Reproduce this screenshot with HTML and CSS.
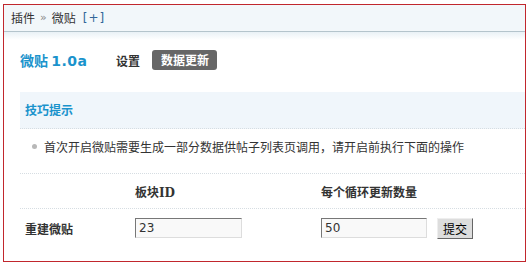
FILE: index.html
```html
<!DOCTYPE html>
<html lang="zh-CN">
<head>
<meta charset="utf-8">
<title>微贴</title>
<link rel="stylesheet" href="styles.css">
</head>
<body>
<div class="frame">
  <div class="topbar">
    <span>插件</span><span class="sep">»</span><span>微贴</span><a class="add" href="#">[+]</a>
  </div>
  <div class="shadow"></div>
  <div class="main">
    <div class="titlerow">
      <h3 class="title">微贴 <span class="ver">1.0a</span></h3>
      <a class="tab" href="#">设置</a>
      <a class="tab current" href="#">数据更新</a>
    </div>
    <div class="tiphead">技巧提示</div>
    <div class="tiprow"><span class="dot"></span>首次开启微贴需要生成一部分数据供帖子列表页调用，请开启前执行下面的操作</div>
    <div class="grid head">
      <div></div>
      <div class="th">板块ID</div>
      <div class="th">每个循环更新数量</div>
    </div>
    <div class="grid body">
      <div class="label">重建微贴</div>
      <div><input class="txt" type="text" value="23"></div>
      <div class="last"><input class="txt" type="text" value="50"><button class="btn" type="button">提交</button></div>
    </div>
  </div>
</div>
</body>
</html>
```
FILE: styles.css
```css
html, body {
  margin: 0;
  padding: 0;
  background: #fff;
}
body {
  width: 528px;
  height: 263px;
  overflow: hidden;
  font-family: "DejaVu Sans", "Noto Sans CJK SC", sans-serif;
  font-size: 12px;
  color: #333;
}
.frame {
  margin: 4px 0 0 3px;
  width: 521px;
  height: 256px;
  border: 1px solid #c1272d;
  overflow: hidden;
}
.topbar {
  height: 26px;
  border-bottom: 1px solid #b4c4cc;
  background: #f2f7fa;
  display: flex;
  align-items: center;
  padding-left: 7px;
  font-family: "Noto Sans CJK SC", sans-serif;
  color: #333;
  line-height: 26px;
}
.topbar .sep {
  margin: 0 5px;
  color: #888;
  font-family: "DejaVu Sans", sans-serif;
  font-size: 11px;
}
.topbar .add {
  margin-left: 7px;
  color: #336699;
  text-decoration: none;
  font-family: "DejaVu Sans", sans-serif;
  letter-spacing: 1px;
}
.shadow {
  height: 8px;
  background: linear-gradient(#e9f1f6, #fff);
}
.main {
  padding-left: 16px;
}
.titlerow {
  display: flex;
  align-items: center;
  height: 30px;
  margin-top: 5px;
}
.title {
  margin: 0;
  font-size: 14px;
  font-weight: bold;
  color: #1a93cc;
  font-family: "Noto Sans CJK SC", sans-serif;
  width: 96px;
}
.title .ver {
  font-family: "DejaVu Sans", sans-serif;
  letter-spacing: 0.5px;
}
.tab {
  font-weight: bold;
  color: #333;
  text-decoration: none;
  font-family: "Noto Sans CJK SC", sans-serif;
  margin-right: 12px;
}
.tab.current {
  background: #666;
  color: #fff;
  border-radius: 3px;
  height: 20px;
  line-height: 20px;
  padding: 0 8px 0 9px;
}
.tiphead {
  margin-top: 17px;
  height: 36px;
  line-height: 36px;
  background: #f0f6fb;
  border-bottom: 1px dotted #d6dde2;
  padding-left: 5px;
  font-weight: bold;
  color: #1a93cc;
  font-family: "Noto Sans CJK SC", sans-serif;
}
.tiprow {
  box-sizing: border-box;
  height: 45px;
  display: flex;
  align-items: center;
  padding: 11px 0 0 12px;
  align-items: flex-start;
  line-height: 14px;
  border-bottom: 1px dotted #d6dde2;
  font-family: "Noto Sans CJK SC", sans-serif;
  color: #333;
}
.dot {
  width: 5px;
  height: 5px;
  border-radius: 50%;
  background: #b8b8b8;
  margin: 4px 7px 0 0;
}
.grid {
  display: grid;
  grid-template-columns: 115px 186px 1fr;
  align-items: center;
}
.grid.head {
  height: 34px;
  border-bottom: 1px dotted #d6dde2;
}
.th {
  font-weight: bold;
  color: #333;
  font-family: "DejaVu Serif", "Noto Sans CJK SC", serif;
}
.grid.body {
  height: 38px;
}
.label {
  padding-left: 5px;
  font-weight: bold;
  font-family: "Noto Sans CJK SC", sans-serif;
  color: #333;
}
.txt {
  box-sizing: border-box;
  width: 107px;
  height: 20px;
  margin: 0;
  padding: 0 3px;
  border: 1px solid;
  border-color: #777 #ddd #ddd #777;
  background: #f9f9f9;
  font-family: "DejaVu Sans", sans-serif;
  font-size: 12px;
  color: #333;
  outline: none;
}
.last {
  display: flex;
  align-items: center;
}
.last .txt {
  width: 106px;
}
.btn {
  box-sizing: border-box;
  margin: 0 0 0 10px;
  width: 36px;
  height: 21px;
  padding: 0;
  border: 1px solid;
  border-color: #eee #666 #666 #eee;
  background: #ddd;
  font-family: "Noto Sans CJK SC", sans-serif;
  font-size: 12px;
  color: #000;
}
```
